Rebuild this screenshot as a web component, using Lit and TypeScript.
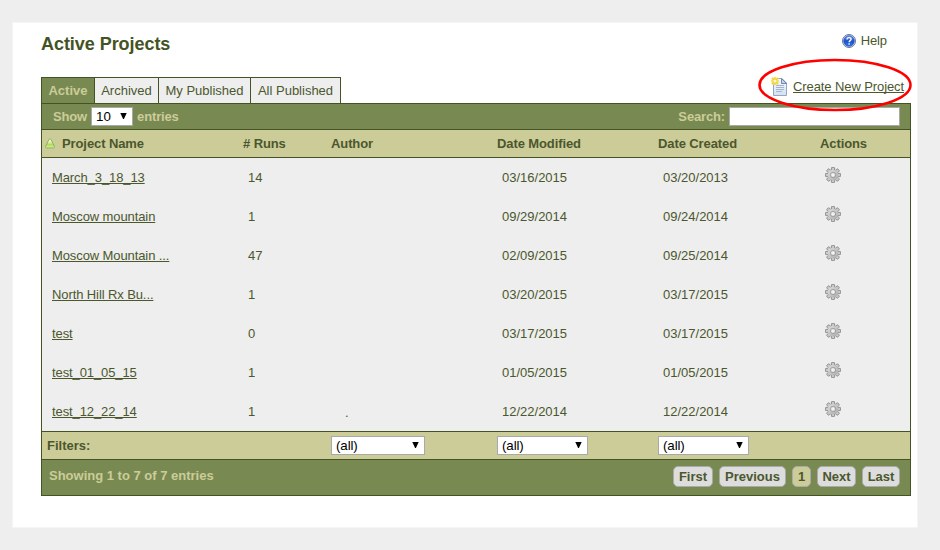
import { LitElement, html, svg, css } from "lit";
import { customElement, property } from "lit/decorators.js";
import { classMap } from "lit/directives/class-map.js";

interface Project {
  name: string;
  runs: number;
  author: string;
  modified: string;
  created: string;
}

const PROJECTS: Project[] = [
  { name: "March_3_18_13", runs: 14, author: "", modified: "03/16/2015", created: "03/20/2013" },
  { name: "Moscow mountain", runs: 1, author: "", modified: "09/29/2014", created: "09/24/2014" },
  { name: "Moscow Mountain ...", runs: 47, author: "", modified: "02/09/2015", created: "09/25/2014" },
  { name: "North Hill Rx Bu...", runs: 1, author: "", modified: "03/20/2015", created: "03/17/2015" },
  { name: "test", runs: 0, author: "", modified: "03/17/2015", created: "03/17/2015" },
  { name: "test_01_05_15", runs: 1, author: "", modified: "01/05/2015", created: "01/05/2015" },
  { name: "test_12_22_14", runs: 1, author: ".", modified: "12/22/2014", created: "12/22/2014" },
];

const TABS = ["Active", "Archived", "My Published", "All Published"];
const PAGES = ["First", "Previous", "1", "Next", "Last"];

const gearTeeth = [0, 45, 90, 135, 180, 225, 270, 315].map(
  (a) => svg`<rect x="6.4" y="0.4" width="3.2" height="4" rx="0.6" transform="rotate(${a} 8 8)"></rect>`
);

const gearIcon = () => html`<svg class="gear" width="16" height="16" viewBox="0 0 16 16">
  <defs>
    <linearGradient id="g" x1="0" y1="0" x2="1" y2="1">
      <stop offset="0" stop-color="#e0e0e0"></stop>
      <stop offset="1" stop-color="#aaa"></stop>
    </linearGradient>
  </defs>
  <g fill="#c8c8c8" stroke="#868686" stroke-width="0.85">${gearTeeth}</g>
  <circle cx="8" cy="8" r="5.3" fill="url(#g)"></circle>
  <circle cx="8" cy="8" r="2.7" fill="none" stroke="#9c9c9c" stroke-width="0.8"></circle>
  <circle cx="8" cy="8" r="1.8" fill="#f2f2f2"></circle>
</svg>`;

const helpIcon = html`<svg width="14" height="14" viewBox="0 0 14 14">
  <defs>
    <linearGradient id="h" x1="0" y1="0" x2="0" y2="1">
      <stop offset="0" stop-color="#6f9cf0"></stop>
      <stop offset="0.5" stop-color="#1d50cc"></stop>
      <stop offset="1" stop-color="#2f78ea"></stop>
    </linearGradient>
  </defs>
  <circle cx="7" cy="7" r="6.5" fill="#dfe5f1" stroke="#56688f" stroke-width="0.9"></circle>
  <circle cx="7" cy="7" r="5.3" fill="url(#h)" stroke="#1b46b4" stroke-width="0.6"></circle>
  <path d="M5 5.5C5 4.2 5.8 3.6 7 3.6s2.1.7 2.1 1.7c0 1.3-2 1.4-2 2.9" fill="none" stroke="#fff" stroke-width="1.3"></path>
  <rect x="6.4" y="9.3" width="1.4" height="1.4" fill="#fff"></rect>
</svg>`;

const newDocIcon = html`<svg width="18" height="20" viewBox="0 0 18 20">
  <defs>
    <linearGradient id="d" x1="0" y1="0" x2="0" y2="1">
      <stop offset="0" stop-color="#f7faff"></stop>
      <stop offset="1" stop-color="#d3dff0"></stop>
    </linearGradient>
  </defs>
  <path d="M3.5 1.500H12l4.500 4.500v12.500h-13z" fill="url(#d)" stroke="#94a6c4"></path>
  <path d="M11.500 1.500v5h5z" fill="#c6d3e8" stroke="#7388ae"></path>
  <path d="M6 8.500h8M6 10.500h8M6 12.500h8M6 14.500h6" stroke="#a5b4cd"></path>
  <rect x="1.500" y="0.500" width="7" height="7" fill="#fbe98a"></rect>
  <path d="M5 0v8M1 4h8M2 1l6 6M8 1l-6 6" stroke="#f0cd24" stroke-width="1.200"></path>
  <circle cx="5" cy="4" r="1.600" fill="#fffbd0"></circle>
</svg>`;

const sortIcon = html`<svg width="10" height="11" viewBox="0 0 10 11">
  <defs>
    <linearGradient id="s" x1="0" y1="0" x2="0" y2="1">
      <stop offset="0" stop-color="#f2fbd8"></stop>
      <stop offset="0.3" stop-color="#e6f5bc"></stop>
      <stop offset="0.65" stop-color="#addb55"></stop>
      <stop offset="1" stop-color="#e2f7ad"></stop>
    </linearGradient>
  </defs>
  <path d="M5 .9c.6 0 .9.3 1.200.9l2.900 6.100c.6 1.300.1 2-1 2H1.900c-1.100 0-1.600-.7-1-2l2.900-6.100C4.100 1.200 4.400.9 5 .9z" fill="url(#s)" stroke="#86ab58" stroke-width="0.900"></path>
</svg>`;

@customElement("select-box")
export class SelectBox extends LitElement {
  @property() value = "";

  static styles = css`
    :host {
      box-sizing: border-box;
      display: flex;
      align-items: center;
      justify-content: space-between;
      height: 19px;
      padding: 0 5px 0 4px;
      border: 1px solid #a9a9a9;
      background: #fff;
      color: #000;
      font: 13.33px/17px "Liberation Sans", Arial, sans-serif;
      letter-spacing: -0.1px;
    }
    .arrow {
      display: block;
      margin-top: -1px;
    }
  `;

  render() {
    return html`<span>${this.value}</span>
      <svg class="arrow" width="7" height="6" viewBox="0 0 7 6"><path d="M0.3 0h6.4L3.900 6H3.100z"></path></svg>`;
  }
}

@customElement("app-root")
export class AppRoot extends LitElement {
  static styles = css`
    :host {
      box-sizing: border-box;
      display: block;
      position: relative;
      width: 940px;
      height: 550px;
      padding: 22px 22px 22px 12px;
      overflow: hidden;
      background: #eee;
      color: #4b572d;
      font: 13px/16px "Liberation Sans", Arial, sans-serif;
    }
    svg {
      display: block;
    }
    .card {
      box-sizing: border-box;
      width: 906px;
      height: 506px;
      padding: 0 6px 0 28px;
      border: 1px solid #f5f5f5;
      background: #fff;
    }
    .heading {
      display: flex;
      justify-content: space-between;
      height: 54px;
      padding-right: 24px;
    }
    .title {
      margin: 11px 0 0;
      font-size: 18px;
      line-height: 20px;
      letter-spacing: -0.05px;
      color: #445323;
    }
    .help {
      display: flex;
      align-items: center;
      gap: 5px;
      height: 16px;
      margin-top: 10px;
      letter-spacing: -0.1px;
    }
    .nav {
      display: flex;
      justify-content: space-between;
      height: 26px;
      padding-right: 7px;
    }
    .tabs {
      display: grid;
      grid-template-columns: 52px 63px 91px 89px;
      gap: 1px;
      height: 25px;
      padding: 1px 1px 0;
      background: #445323;
    }
    .tab {
      background: #eee;
      text-align: center;
      line-height: 25px;
    }
    .tab.on {
      background: #788a52;
      color: #cccc99;
      font-weight: bold;
    }
    .create {
      display: flex;
      align-items: flex-start;
      gap: 5px;
    }
    .create .label {
      margin-top: 2px;
    }
    .link {
      letter-spacing: -0.1px;
      text-decoration: underline;
      text-underline-offset: 1px;
      text-decoration-thickness: 1px;
      text-decoration-skip-ink: none;
    }
    .panel {
      box-sizing: border-box;
      width: 870px;
      height: 393px;
      border: 1px solid #445323;
      background: #eee;
    }
    .bar {
      display: flex;
      align-items: center;
      justify-content: space-between;
      height: 25px;
      padding: 0 10px 0 11px;
      background: #788a52;
      color: #cccc99;
      font-weight: bold;
      letter-spacing: -0.15px;
      border-bottom: 1px solid #445323;
    }
    .group {
      display: flex;
      align-items: center;
      gap: 4px;
    }
    .count {
      width: 42px;
    }
    .search {
      box-sizing: border-box;
      width: 171px;
      height: 19px;
      border: 1px solid #a9a9a9;
      background: #fff;
    }
    .row {
      display: grid;
      grid-template-columns: 201px 88px 166px 161px 162px 90px;
      align-items: center;
      height: 39px;
    }
    .row > .cell {
      padding-left: 5px;
    }
    .row > .cell:first-child {
      padding-left: 10px;
    }
    .row > .author {
      padding: 2px 0 0 14px;
    }
    .gear {
      margin: -5px 0 0;
    }
    .head,
    .filters {
      height: 27px;
      background: #cccc99;
      font-weight: bold;
      border-bottom: 1px solid #445323;
    }
    .head {
      letter-spacing: -0.1px;
    }
    .filters {
      border-top: 1px solid #445323;
    }
    .name {
      display: flex;
      align-items: center;
      gap: 7px;
      padding-left: 3px;
    }
    .filters .caption {
      grid-column: span 2;
      padding-left: 5px;
    }
    .w94 {
      width: 94px;
    }
    .w91 {
      width: 91px;
    }
    .foot {
      display: flex;
      justify-content: space-between;
      height: 35px;
      padding: 0 10px 0 7px;
      background: #788a52;
      color: #cccc99;
      font-weight: bold;
    }
    .info {
      margin-top: 8px;
    }
    .pages {
      display: grid;
      grid-template-columns: 40px 67px 19px 39px 38px;
      gap: 6px;
      margin-top: 6px;
    }
    .page {
      box-sizing: border-box;
      height: 21px;
      border: 1px solid #aaa;
      border-radius: 5px;
      background: #ddd;
      color: #4b572d;
      line-height: 19px;
      text-align: center;
    }
    .page.on {
      background: #cccc99;
    }
    .ring {
      position: absolute;
      left: 757px;
      top: 57px;
    }
  `;

  render() {
    return html`
      <div class="card">
        <div class="heading">
          <h1 class="title">Active Projects</h1>
          <div class="help">${helpIcon}<span>Help</span></div>
        </div>
        <div class="nav">
          <div class="tabs">
            ${TABS.map((t, i) => html`<div class=${classMap({ tab: true, on: i === 0 })}>${t}</div>`)}
          </div>
          <div class="create">${newDocIcon}<span class="link label">Create New Project</span></div>
        </div>
        <div class="panel">
          <div class="bar">
            <div class="group"><span>Show</span><select-box class="count" value="10"></select-box><span>entries</span></div>
            <div class="group"><span>Search:</span><div class="search"></div></div>
          </div>
          <div class="row head">
            <div class="name">${sortIcon}<span>Project Name</span></div>
            <div># Runs</div>
            <div>Author</div>
            <div>Date Modified</div>
            <div>Date Created</div>
            <div>Actions</div>
          </div>
          ${PROJECTS.map(
            (p) => html`<div class="row">
              <div class="cell"><span class="link">${p.name}</span></div>
              <div class="cell">${p.runs}</div>
              <div class="cell author">${p.author}</div>
              <div class="cell">${p.modified}</div>
              <div class="cell">${p.created}</div>
              <div class="cell">${gearIcon()}</div>
            </div>`
          )}
          <div class="row filters">
            <div class="caption">Filters:</div>
            <select-box class="w94" value="(all)"></select-box>
            <select-box class="w91" value="(all)"></select-box>
            <select-box class="w91" value="(all)"></select-box>
          </div>
          <div class="foot">
            <div class="info">Showing 1 to 7 of 7 entries</div>
            <div class="pages">
              ${PAGES.map((p) => html`<div class=${classMap({ page: true, on: p === "1" })}>${p}</div>`)}
            </div>
          </div>
        </div>
      </div>
      <svg class="ring" width="156" height="56" viewBox="0 0 156 56">
        <ellipse cx="78" cy="28" rx="75.5" ry="25" fill="none" stroke="#f00" stroke-width="2.6"></ellipse>
      </svg>
    `;
  }
}
